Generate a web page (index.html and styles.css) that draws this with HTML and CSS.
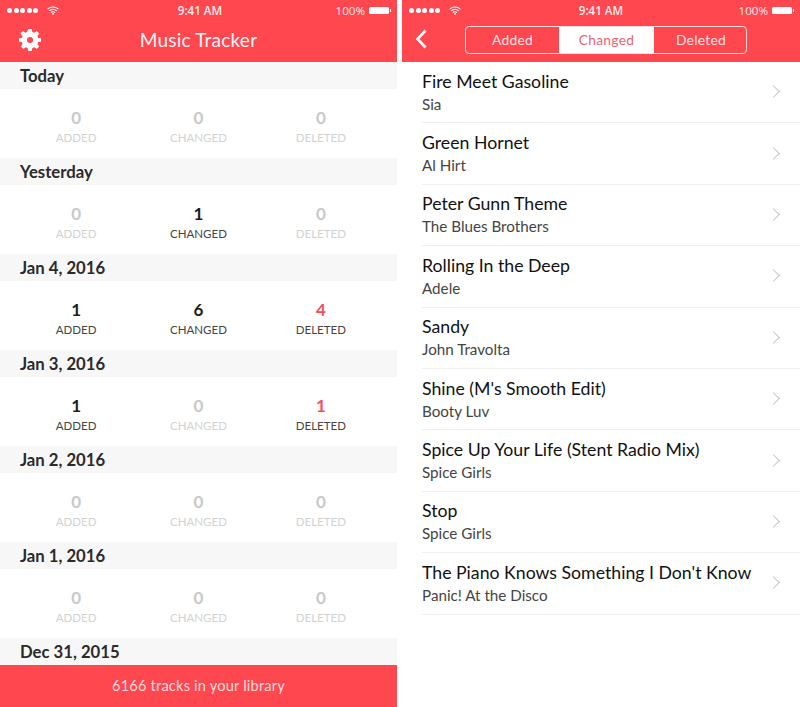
FILE: index.html
```html
<!DOCTYPE html>
<html>
<head>
	<meta charset="utf-8">
	<title>Music Tracker</title>
	<link rel="stylesheet" href="styles.css">
</head>
<body>
	<div class="screens">
		<div class="phone phone-left">
			<div class="topbar">
				<div class="status">
					<div class="status-left">
						<span class="dots"><i></i><i></i><i></i><i></i><i></i></span>
						<svg class="wifi" width="12" height="9" viewBox="0 0 12 9"><path d="M.6 3.2a7.6 7.6 0 0 1 10.800 0M2.300 4.900a5.200 5.200 0 0 1 7.400 0M4 6.600a2.800 2.800 0 0 1 4 0" fill="none" stroke="#fff" stroke-width="1.100"/><path d="M6 9 4.800 7.700a1.700 1.700 0 0 1 2.400 0z" fill="#fff"/></svg>
					</div>
					<span class="clock">9:41 AM</span>
					<div class="status-right">
						<span>100%</span>
						<span class="battery"></span>
					</div>
				</div>
				<div class="nav">
					<svg class="gear" width="22" height="22" viewBox="0 0 22 22"><path fill="#fff" fill-rule="evenodd" d="M9.200 0h3.600l.5 3 1.900.8 2.500-1.800 2.500 2.500-1.800 2.500.8 1.900 3 .5v3.200l-3 .5-.8 1.900 1.800 2.500-2.500 2.500-2.500-1.800-1.900.8-.5 3H9.200l-.5-3-1.900-.8-2.500 1.800-2.500-2.500 1.800-2.500-.8-1.900-3-.5V9.400l3-.5.8-1.900L1.300 4.500l2.500-2.500 2.500 1.800 1.900-.8zM11 8a3 3 0 1 0 0 6 3 3 0 0 0 0-6z"/></svg>
					<span class="nav-title">Music Tracker</span>
				</div>
			</div>

			<div class="day-head">Today</div>
			<div class="day-row">
				<div class="stat"><b>0</b><span>ADDED</span></div>
				<div class="stat"><b>0</b><span>CHANGED</span></div>
				<div class="stat"><b>0</b><span>DELETED</span></div>
			</div>
			<div class="day-head">Yesterday</div>
			<div class="day-row">
				<div class="stat"><b>0</b><span>ADDED</span></div>
				<div class="stat on"><b>1</b><span>CHANGED</span></div>
				<div class="stat"><b>0</b><span>DELETED</span></div>
			</div>
			<div class="day-head">Jan 4, 2016</div>
			<div class="day-row">
				<div class="stat on"><b>1</b><span>ADDED</span></div>
				<div class="stat on"><b>6</b><span>CHANGED</span></div>
				<div class="stat on del"><b>4</b><span>DELETED</span></div>
			</div>
			<div class="day-head">Jan 3, 2016</div>
			<div class="day-row">
				<div class="stat on"><b>1</b><span>ADDED</span></div>
				<div class="stat"><b>0</b><span>CHANGED</span></div>
				<div class="stat on del"><b>1</b><span>DELETED</span></div>
			</div>
			<div class="day-head">Jan 2, 2016</div>
			<div class="day-row">
				<div class="stat"><b>0</b><span>ADDED</span></div>
				<div class="stat"><b>0</b><span>CHANGED</span></div>
				<div class="stat"><b>0</b><span>DELETED</span></div>
			</div>
			<div class="day-head">Jan 1, 2016</div>
			<div class="day-row">
				<div class="stat"><b>0</b><span>ADDED</span></div>
				<div class="stat"><b>0</b><span>CHANGED</span></div>
				<div class="stat"><b>0</b><span>DELETED</span></div>
			</div>
			<div class="day-head">Dec 31, 2015</div>

			<div class="footer">6166 tracks in your library</div>
		</div>

		<div class="phone phone-right">
			<div class="topbar">
				<div class="status">
					<div class="status-left">
						<span class="dots"><i></i><i></i><i></i><i></i><i></i></span>
						<svg class="wifi" width="12" height="9" viewBox="0 0 12 9"><path d="M.6 3.2a7.6 7.6 0 0 1 10.800 0M2.300 4.900a5.200 5.200 0 0 1 7.400 0M4 6.600a2.800 2.800 0 0 1 4 0" fill="none" stroke="#fff" stroke-width="1.100"/><path d="M6 9 4.800 7.700a1.700 1.700 0 0 1 2.400 0z" fill="#fff"/></svg>
					</div>
					<span class="clock">9:41 AM</span>
					<div class="status-right">
						<span>100%</span>
						<span class="battery"></span>
					</div>
				</div>
				<div class="nav nav-seg">
					<svg class="back" width="12" height="20" viewBox="0 0 12 20"><path d="M10.500 1.500 2.500 10l8 8.500" fill="none" stroke="#fff" stroke-width="2.600"/></svg>
					<div class="seg">
						<span>Added</span>
						<span class="seg-on">Changed</span>
						<span>Deleted</span>
					</div>
				</div>
			</div>

			<ul class="tracks">
				<li><div><h3>Fire Meet Gasoline</h3><p>Sia</p></div><em></em></li>
				<li><div><h3>Green Hornet</h3><p>Al Hirt</p></div><em></em></li>
				<li><div><h3>Peter Gunn Theme</h3><p>The Blues Brothers</p></div><em></em></li>
				<li><div><h3>Rolling In the Deep</h3><p>Adele</p></div><em></em></li>
				<li><div><h3>Sandy</h3><p>John Travolta</p></div><em></em></li>
				<li><div><h3>Shine (M's Smooth Edit)</h3><p>Booty Luv</p></div><em></em></li>
				<li><div><h3>Spice Up Your Life (Stent Radio Mix)</h3><p>Spice Girls</p></div><em></em></li>
				<li><div><h3>Stop</h3><p>Spice Girls</p></div><em></em></li>
				<li><div><h3>The Piano Knows Something I Don't Know</h3><p>Panic! At the Disco</p></div><em></em></li>
			</ul>
		</div>
	</div>
</body>
</html>
```

FILE: styles.css
```css
html, body {
	margin: 0;
	background: #fff;
}
body {
	font-family: "Lato", "Liberation Sans", sans-serif;
	color: #1c1c1c;
}

.screens {
	display: flex;
	justify-content: space-between;
	width: 800px;
	height: 707px;
	overflow: hidden;
}
.phone {
	display: flex;
	flex-direction: column;
	height: 707px;
	overflow: hidden;
}
.phone-left {
	width: 397px;
}
.phone-right {
	width: 398px;
}

/* red bar on top */
.topbar {
	height: 62px;
	background: #ff474f;
	color: #fff;
	flex: none;
}
.status {
	display: flex;
	justify-content: space-between;
	align-items: center;
	height: 20px;
	padding: 0 6px 0 7px;
	position: relative;
	font-family: "Open Sans", sans-serif;
	font-size: 11.600px;
	color: #ffeaeb;
}
.status-left, .status-right {
	display: flex;
	align-items: center;
}
.status-left {
	gap: 9px;
}
.status-right {
	gap: 4px;
}
.dots {
	display: flex;
	gap: 1.500px;
}
.dots i {
	width: 5px;
	height: 5px;
	border-radius: 50%;
	background: #fff;
}
.clock {
	position: absolute;
	left: 0;
	right: 0;
	text-align: center;
	font-weight: 600;
}
.phone-left .clock {
	left: 3px;
}
.battery {
	width: 20px;
	height: 7px;
	background: #fff;
	border-radius: 1.500px;
	margin-right: 2px;
	position: relative;
}
.battery:after {
	content: "";
	position: absolute;
	right: -2px;
	top: 2px;
	width: 1px;
	height: 3px;
	background: #fff;
}
.nav {
	display: flex;
	align-items: center;
	justify-content: center;
	height: 39px;
	position: relative;
}
.gear {
	position: absolute;
	left: 19px;
	top: 9px;
}
.nav-title {
	font-size: 19px;
	letter-spacing: .22px;
	opacity: .95;
}

/* left screen */
.day-head {
	flex: none;
	height: 27px;
	line-height: 29px;
	padding-left: 20px;
	background: #f7f7f7;
	font-size: 16.700px;
	font-weight: 700;
	color: #2a2a2a;
}
.day-row {
	flex: none;
	display: grid;
	grid-template-columns: repeat(3, 1fr);
	height: 69px;
	padding: 0 15px;
	box-sizing: border-box;
}
.stat {
	display: flex;
	flex-direction: column;
	align-items: center;
	padding-top: 19px;
	color: #c9c9c9;
}
.stat b {
	font-size: 17px;
	line-height: 20px;
	font-weight: 700;
}
.stat span {
	font-size: 11.500px;
	line-height: 20px;
	color: #d2d2d2;
}
.stat.on {
	color: #1c1c1c;
}
.stat.on span {
	color: #444;
}
.stat.del b {
	color: #f0505a;
}
.footer {
	position: absolute;
	left: 0;
	top: 665px;
	width: 397px;
	height: 42px;
	line-height: 41px;
	text-align: center;
	background: #ff474f;
	color: #ffdcde;
	font-size: 14.600px;
	letter-spacing: .2px;
}

/* right screen */
.nav-seg {
	justify-content: flex-start;
	height: 40px;
}
.back {
	position: absolute;
	left: 13px;
	top: 9px;
}
.seg {
	display: grid;
	grid-template-columns: 93px 95px 94px;
	margin: 0 auto;
	position: relative;
	left: 5px;
	height: 28px;
	border: 1px solid #ffd9db;
	border-radius: 4px;
	box-sizing: border-box;
	width: 282px;
	overflow: hidden;
	font-size: 13.800px;
	letter-spacing: .3px;
	color: #ffe3e5;
}
.seg span {
	display: flex;
	align-items: center;
	justify-content: center;
	padding-bottom: 2px;
}
.seg .seg-on {
	background: #fff;
	color: #ef6470;
}
.tracks {
	list-style: none;
	margin: 0;
	padding: 0 0 0 20px;
}
.tracks li {
	display: flex;
	align-items: center;
	justify-content: space-between;
	height: 61.400px;
	box-sizing: border-box;
	border-bottom: 1px solid #efefef;
	padding: 1px 22px 0 0;
}
.tracks h3 {
	margin: 0;
	font-size: 17.700px;
	line-height: 22px;
	font-weight: 400;
	color: #111;
}
.tracks p {
	margin: 0;
	font-size: 15.200px;
	line-height: 22px;
	color: #444;
}
.tracks em {
	width: 8px;
	height: 8px;
	margin-bottom: 2px;
	border-top: 1.500px solid #c4c4c4;
	border-right: 1.500px solid #c4c4c4;
	transform: rotate(45deg);
}
```
